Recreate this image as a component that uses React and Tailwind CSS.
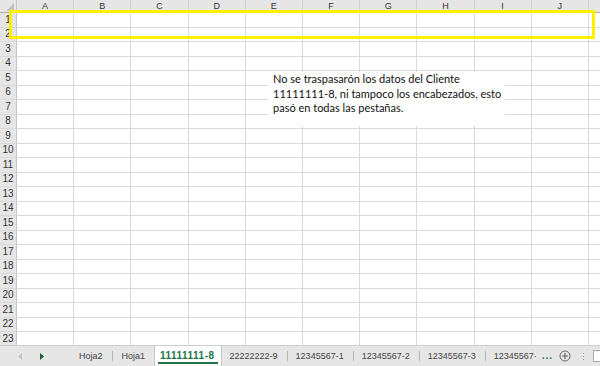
const cols = ["A", "B", "C", "D", "E", "F", "G", "H", "I", "J", ""];
const rows = Array.from({ length: 23 }, (_, i) => i + 1);
const tabs = ["Hoja2", "Hoja1", "11111111-8", "22222222-9", "12345567-1", "12345567-2", "12345567-3", "12345567·"];

const SheetTab = ({ name, active, last, wide }) => (
  <div
    className={
      active
        ? "h-full pl-[5px] pr-[6px] bg-white border-x border-[#c8c8c8] flex items-center relative"
        : last
        ? "h-full pl-[8px] flex items-center"
        : wide
        ? "h-full px-[9px] flex items-center"
        : "h-full pl-[8px] pr-[9px] flex items-center"
    }
  >
    <span className={active ? "text-[#217346] font-bold text-[10px] tracking-[0.5px]" : "text-[#444]"}>{name}</span>
    {active && <div className="absolute left-[3px] right-[3px] bottom-[2px] h-[2px] bg-[#217346]"></div>}
  </div>
);

export default function App() {
  return (
    <div className="w-[600px] h-[366px] overflow-hidden bg-white relative font-['Segoe_UI','Noto_Sans',sans-serif]">
      <div className="h-[345px] overflow-hidden">
        {/* column headers */}
        <div className="flex h-[13px] bg-[#e6e6e6] border-b border-[#ababab]">
          <div className="w-[17px] shrink-0 border-r border-[#c6c6c6] relative">
            <svg className="absolute right-[2px] bottom-[1px]" width="8" height="8" viewBox="0 0 8 8">
              <path d="M8 0 L8 8 L0 8 Z" fill="#c2c2c2" />
            </svg>
          </div>
          {cols.map((c, i) => (
            <div
              key={i}
              className="w-[57.2px] shrink-0 border-r border-[#cfcfcf] flex items-center justify-center text-[9px] leading-none text-[#333] font-['Liberation_Sans',sans-serif]"
            >
              {c}
            </div>
          ))}
        </div>
        {rows.map((r) => (
          <div key={r} className="flex h-[14.5px] border-b border-[#dadada]">
            <div className="w-[17px] shrink-0 bg-[#e6e6e6] border-r border-[#c6c6c6] flex items-center justify-center text-[10px] leading-none text-[#333] font-['Liberation_Sans',sans-serif]">
              {r}
            </div>
            {cols.map((c, i) => (
              <div key={i} className="w-[57.2px] shrink-0 border-r border-[#dadada]"></div>
            ))}
          </div>
        ))}
      </div>

      {/* sheet tab bar */}
      <div className="h-[21px] bg-[#e6e6e6] border-t border-[#cfcfcf] flex items-stretch text-[9px] leading-none font-['Liberation_Sans',sans-serif]">
        <div className="w-[70px] flex items-center shrink-0">
          <svg className="ml-[18px]" width="5" height="7" viewBox="0 0 5 7">
            <path d="M4 0 L0 3.5 L4 7 Z" fill="#c4c4c4" />
          </svg>
          <svg className="ml-[16px]" width="5" height="7" viewBox="0 0 5 7">
            <path d="M1 0 L5 3.5 L1 7 Z" fill="#1e5c3a" />
          </svg>
        </div>
        <div className="w-px my-[4px] bg-[#b5b5b5]"></div>
        <div className="flex items-stretch shrink-0">
          {tabs.map((t, i) => (
            <div key={t} className="flex items-stretch shrink-0">
              {i > 0 && i !== 2 && i !== 3 && <div className="w-px my-[5px] bg-[#b5b5b5]"></div>}
              <SheetTab name={t} active={i === 2} last={i === tabs.length - 1} wide={i < 2} />
            </div>
          ))}
        </div>
        <div className="flex items-center text-[#217346] text-[10px] font-bold ml-[5px] tracking-[1px]">...</div>
        <div className="flex items-center ml-[6px]">
          <svg width="12" height="12" viewBox="0 0 12 12">
            <circle cx="6" cy="6" r="5" fill="none" stroke="#666" strokeWidth="1" />
            <path d="M6 3 V9 M3 6 H9" stroke="#666" strokeWidth="1.2" />
          </svg>
        </div>
        <div className="flex flex-col justify-center gap-[2px] ml-[12px]">
          <div className="w-[1px] h-[1px] bg-[#999]"></div>
          <div className="w-[1px] h-[1px] bg-[#999]"></div>
          <div className="w-[1px] h-[1px] bg-[#999]"></div>
        </div>
        <div className="flex items-center ml-[9px]">
          <div className="w-[10px] h-[12px] bg-white border border-[#aaa]"></div>
        </div>
      </div>

      {/* yellow highlight */}
      <div className="absolute left-[9px] top-[10px] w-[586px] h-[29px] border-[3px] border-[#fff000]"></div>

      {/* note */}
      <div className="absolute left-[268px] top-[72px] w-[237px] h-[54px] bg-white px-[5px] pt-0 whitespace-nowrap font-['Lato',sans-serif] text-[11px] leading-[14.5px] text-[#111]">
        <p>No se traspasarón los datos del Cliente</p>
        <p>11111111-8, ni tampoco los encabezados, esto</p>
        <p>pasó en todas las pestañas.</p>
      </div>
    </div>
  );
}
